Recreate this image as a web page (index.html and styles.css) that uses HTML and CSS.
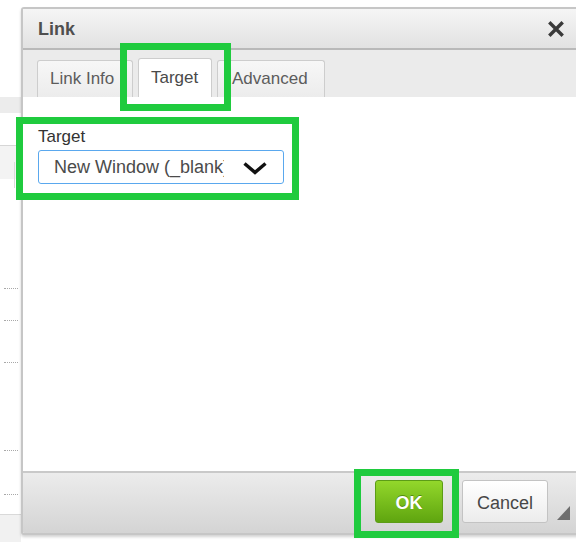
FILE: index.html
```html
<!DOCTYPE html>
<html lang="en">
<head>
<meta charset="utf-8">
<title>Link</title>
<link rel="stylesheet" href="styles.css">
</head>
<body>
<div class="page">
  <div class="page-strip">
    <div class="strip-band strip-band-top"></div>
    <div class="strip-band strip-band-mid"><span class="strip-tick"></span></div>
    <div class="strip-rows">
      <span class="dots dots-1"></span>
      <span class="dots dots-2"></span>
      <span class="dots dots-3"></span>
      <span class="dots dots-4"></span>
      <span class="dots dots-5"></span>
    </div>
    <div class="strip-foot"></div>
  </div>
</div>

<div class="dialog">
  <div class="dialog-title">
    <span class="title-text">Link</span>
    <svg class="close-icon" width="16" height="16" viewBox="0 0 16 16" aria-hidden="true">
      <path d="M2.5 2.5 L13.5 13.5 M13.5 2.5 L2.5 13.5" stroke="#3a3a3a" stroke-width="3.4" stroke-linecap="square"/>
    </svg>
  </div>
  <div class="tab-bar">
    <div class="tab tab-info">Link Info</div>
    <div class="tab tab-active">Target</div>
    <div class="tab tab-advanced">Advanced</div>
  </div>
  <div class="dialog-body">
    <label class="field-label">Target</label>
    <div class="select">
      <span class="select-value">New Window (_blank)</span>
      <svg class="select-chevron" width="26" height="14" viewBox="0 0 26 14" aria-hidden="true">
        <polyline points="2.5,2.5 13,11.5 23.5,2.5" fill="none" stroke="#111" stroke-width="3.4"/>
      </svg>
    </div>
  </div>
  <div class="dialog-footer">
    <button class="btn btn-ok">OK</button>
    <button class="btn btn-cancel">Cancel</button>
    <span class="resize-grip"></span>
  </div>
</div>

<div class="mark mark-tab"></div>
<div class="mark mark-field"></div>
<div class="mark mark-ok"></div>
</body>
</html>
```

FILE: styles.css
```css
* { box-sizing: border-box; }

html, body {
  margin: 0;
  padding: 0;
  width: 576px;
  height: 542px;
  overflow: hidden;
  background: #ffffff;
  font-family: "Liberation Sans", Arial, sans-serif;
}

/* page behind the dialog */
.page {
  height: 542px;
  display: flex;
}

.page-strip {
  width: 21px;
  height: 542px;
  display: flex;
  flex-direction: column;
  padding-top: 97px;
}

.strip-band-top {
  height: 16px;
  background: #ececec;
}

.strip-band-mid {
  margin-top: 32px;
  height: 34px;
  background: #f3f3f3;
  border-top: 1px solid #d6d6d6;
  position: relative;
}

.strip-tick {
  position: absolute;
  left: 14px;
  top: 16px;
  width: 1px;
  height: 26px;
  background: #dadada;
}

.strip-rows {
  height: 335px;
  position: relative;
}

.dots {
  position: absolute;
  left: 4px;
  width: 14px;
  border-top: 1px dotted #a8a8a8;
}
.dots-1 { top: 109px; }
.dots-2 { top: 141px; }
.dots-3 { top: 183px; }
.dots-4 { top: 271px; }
.dots-5 { top: 315px; }

.strip-foot {
  flex: 1;
  background: #f1f1f1;
  border-top: 1px solid #d9d9d9;
}

/* the dialog */
.dialog {
  position: absolute;
  left: 21px;
  top: 7px;
  width: 559px;
  height: 528px;
  border: 2px solid #c6c6c6;
  border-radius: 3px;
  background: #ffffff;
  box-shadow: 0 2px 3px rgba(0, 0, 0, 0.18);
  display: flex;
  flex-direction: column;
  overflow: hidden;
}

.dialog-title {
  height: 41px;
  flex: none;
  display: flex;
  align-items: center;
  justify-content: space-between;
  padding: 0 14px 0 15px;
  background: linear-gradient(#f5f5f5, #e2e2e2);
  border-bottom: 2px solid #b9b9b9;
}

.title-text {
  font-size: 18px;
  font-weight: bold;
  color: #4f4f4f;
  padding-top: 2px;
}

.close-icon {
  margin-top: 1px;
}

.tab-bar {
  height: 47px;
  flex: none;
  display: flex;
  align-items: flex-end;
  gap: 5px;
  padding-left: 14px;
  background: #ebebeb;
}

.tab {
  height: 37px;
  padding: 0 0 0 12px;
  display: flex;
  align-items: center;
  font-size: 17px;
  color: #5c5c5c;
  background: linear-gradient(#f7f7f7, #ececec);
  border: 1.5px solid #cdcdcd;
  border-bottom: none;
  border-radius: 3px 3px 0 0;
}

.tab-info {
  width: 96px;
}

.tab-active {
  height: 39px;
  width: 74px;
  background: #ffffff;
  color: #4a4a4a;
}

.tab-advanced {
  width: 108px;
  padding-left: 14px;
}

.dialog-body {
  flex: 1;
  padding: 30px 0 0 15px;
  display: flex;
  flex-direction: column;
  align-items: flex-start;
}

.field-label {
  font-size: 17px;
  line-height: 20px;
  color: #333333;
}

.select {
  margin-top: 3px;
  width: 246px;
  height: 34px;
  border: 1.5px solid #5aa8ee;
  border-radius: 3px;
  display: flex;
  align-items: center;
  padding-left: 15px;
  background: #ffffff;
}

/* the option label is clipped before the arrow, as a native select does */
.select-value {
  width: 170px;
  flex: none;
  overflow: hidden;
  white-space: nowrap;
  font-size: 18px;
  color: #4b4b4b;
}

.select-chevron {
  margin-left: 18px;
  margin-top: 1px;
}

.dialog-footer {
  height: 62px;
  flex: none;
  display: flex;
  align-items: flex-start;
  justify-content: flex-end;
  padding: 7px 8px 0 0;
  background: linear-gradient(#ececec, #d4d4d4);
  border-top: 2px solid #c9c9c9;
}

.btn {
  height: 43px;
  padding: 3px 0 0;
  border-radius: 3px;
  font-family: "Liberation Sans", Arial, sans-serif;
  font-size: 18px;
  cursor: pointer;
}

.btn-ok {
  width: 68px;
  font-weight: bold;
  color: #ffffff;
  text-shadow: 0 -1px 0 rgba(40, 90, 0, 0.55);
  background: linear-gradient(#93d72b, #5fa50f);
  border: 1.5px solid #5c9c16;
}

.btn-cancel {
  width: 86px;
  margin-left: 19px;
  color: #474747;
  background: linear-gradient(#ffffff, #ececec);
  border: 1.5px solid #c3c3c3;
}

.resize-grip {
  margin: 26px 0 0 9px;
  width: 0;
  height: 0;
  border-left: 13px solid transparent;
  border-bottom: 14px solid #6f6f6f;
}

/* highlight frames drawn over the dialog */
.mark {
  position: absolute;
  border: 7px solid #1fcb3e;
}

.mark-tab {
  left: 120px;
  top: 43px;
  width: 111px;
  height: 68px;
}

.mark-field {
  left: 16px;
  top: 117px;
  width: 283px;
  height: 83px;
}

.mark-ok {
  left: 354px;
  top: 469px;
  width: 105px;
  height: 69px;
}
```
